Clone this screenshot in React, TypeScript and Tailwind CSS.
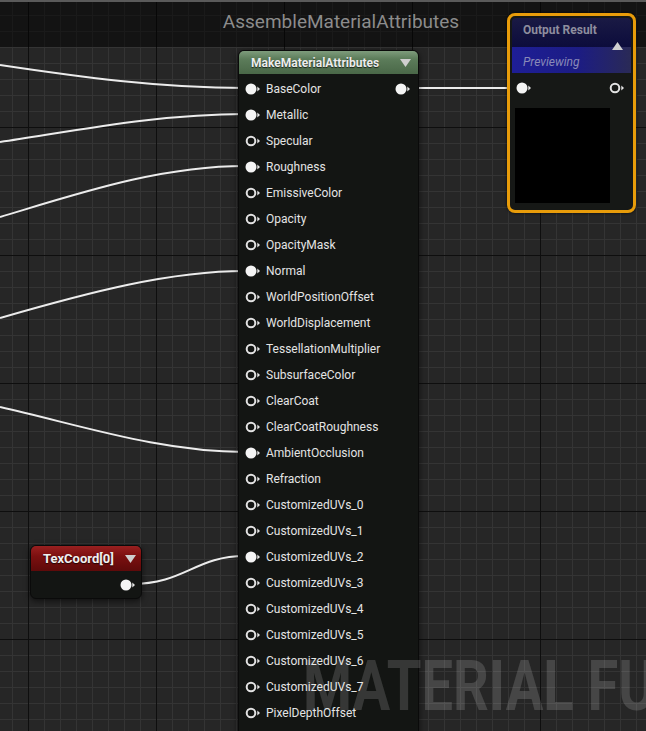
import React from 'react';

const PINS: { name: string; linked?: boolean }[] = [
  { name: 'BaseColor', linked: true },
  { name: 'Metallic', linked: true },
  { name: 'Specular' },
  { name: 'Roughness', linked: true },
  { name: 'EmissiveColor' },
  { name: 'Opacity' },
  { name: 'OpacityMask' },
  { name: 'Normal', linked: true },
  { name: 'WorldPositionOffset' },
  { name: 'WorldDisplacement' },
  { name: 'TessellationMultiplier' },
  { name: 'SubsurfaceColor' },
  { name: 'ClearCoat' },
  { name: 'ClearCoatRoughness' },
  { name: 'AmbientOcclusion', linked: true },
  { name: 'Refraction' },
  { name: 'CustomizedUVs_0' },
  { name: 'CustomizedUVs_1' },
  { name: 'CustomizedUVs_2', linked: true },
  { name: 'CustomizedUVs_3' },
  { name: 'CustomizedUVs_4' },
  { name: 'CustomizedUVs_5' },
  { name: 'CustomizedUVs_6' },
  { name: 'CustomizedUVs_7' },
  { name: 'PixelDepthOffset' },
];

const WIRES = [
  'M0 65 C80 77, 160 88, 245 88',
  'M0 142 C80 130, 160 114, 245 114',
  'M0 217 C80 193, 160 166, 245 166',
  'M0 318 C90 292, 170 271, 245 271',
  'M0 407 C80 425, 160 452, 245 452',
  'M131 584 C185 584, 195 556, 245 556',
  'M408 88 L517 88',
];

function Pin({ filled }: { filled?: boolean }) {
  return (
    <svg width="16" height="12" viewBox="0 0 16 12" className="shrink-0">
      {filled ? (
        <circle cx="6" cy="6" r="5.5" fill="#f4f4f4" />
      ) : (
        <circle cx="6" cy="6" r="4.3" fill="none" stroke="#e2e2e2" strokeWidth="2" />
      )}
      <path d="M12.3 3.6 L15 6 L12.3 8.4 Z" fill="#e6e6e6" />
    </svg>
  );
}

function Caret({ up }: { up?: boolean }) {
  return (
    <svg width="11" height="8" viewBox="0 0 11 8">
      <path d={up ? 'M0 8 L5.5 0 L11 8 Z' : 'M0 0 L11 0 L5.5 8 Z'} fill="#cfcfcf" />
    </svg>
  );
}

function Canvas() {
  return (
    <svg width="646" height="731" className="absolute inset-0">
      <defs>
        <pattern id="minor" x="12" y="15" width="16" height="16" patternUnits="userSpaceOnUse">
          <rect x="0" y="0" width="1" height="16" fill="#343434" />
          <rect x="0" y="0" width="16" height="1" fill="#343434" />
        </pattern>
        <pattern id="major" x="28" y="127" width="128" height="128" patternUnits="userSpaceOnUse">
          <rect x="0" y="0" width="1" height="128" fill="#0e0e0e" />
          <rect x="0" y="0" width="128" height="1" fill="#0e0e0e" />
        </pattern>
      </defs>
      <rect width="646" height="731" fill="#262626" />
      <rect width="646" height="731" fill="url(#minor)" />
      <rect width="646" height="731" fill="url(#major)" />
      {WIRES.map((d) => (
        <path key={d} d={d} fill="none" stroke="#ececec" strokeWidth="2" />
      ))}
    </svg>
  );
}

export default function App() {
  return (
    <div className="relative w-[646px] h-[731px] overflow-hidden bg-[#262626] font-['Roboto',sans-serif]">
      <Canvas />

      {/* title bar */}
      <div className="absolute top-0 left-0 right-0 h-[47px] bg-black/50 border-t-2 border-[#5a5a5a] flex items-center justify-center">
        <span className="text-[19px] text-[#8c8c8c] ml-[36px] -mt-[4px]">AssembleMaterialAttributes</span>
      </div>

      {/* MakeMaterialAttributes */}
      <div className="absolute left-[238px] top-[50px] w-[181px] h-[720px] rounded-[6px] bg-[#131513] border border-[#0a0a0a] shadow-[0_2px_6px_rgba(0,0,0,0.6)] flex flex-col">
        <div className="h-[23px] rounded-t-[5px] bg-[linear-gradient(180deg,#7e9c7c_0%,#5c7c5a_35%,#4a6848_100%)] flex items-center justify-between pl-[12px] pr-[7px]">
          <span className="text-[12px] font-bold text-[#ececec] [text-shadow:0_1px_1px_rgba(0,0,0,0.7)]">MakeMaterialAttributes</span>
          <Caret />
        </div>
        <div className="flex flex-col pt-[2px]">
          {PINS.map((p, i) => (
            <div key={p.name} className="h-[26px] flex items-center justify-between pl-[6px] pr-[7px]">
              <div className="flex items-center gap-[5px]">
                <Pin filled={p.linked} />
                <span className="text-[12px] text-[#e4e4e4]">{p.name}</span>
              </div>
              {i === 0 && <Pin filled />}
            </div>
          ))}
        </div>
      </div>

      {/* Output Result */}
      <div className="absolute left-[507px] top-[13px] w-[129px] h-[200px] rounded-[8px] border-[3px] border-[#e89c0a] bg-[#161816] p-[2px] flex flex-col shadow-[0_0_3px_rgba(0,0,0,0.8)]">
        <div className="h-[29px] rounded-t-[4px] bg-[linear-gradient(180deg,#1a1a44_0%,#0c0c3c_100%)] flex items-start pl-[11px] pt-[3px]">
          <span className="text-[12px] font-bold text-[#8e8e9e]">Output Result</span>
        </div>
        <div className="h-[26px] bg-[linear-gradient(90deg,#1e1e96_0%,#1c1c84_55%,#2a2a56_100%)] flex items-center pl-[11px] pt-[3px] relative">
          <span className="text-[12px] italic text-[#8a8ab8]">Previewing</span>
          <div className="absolute right-[8px] -top-[5px]">
            <Caret up />
          </div>
        </div>
        <div className="h-[30px] flex items-center justify-between pl-[4px] pr-[6px]">
          <Pin filled />
          <Pin />
        </div>
        <div className="ml-[3px] mt-[5px] w-[95px] h-[95px] bg-black" />
      </div>

      {/* TexCoord[0] */}
      <div className="absolute left-[30px] top-[545px] w-[112px] h-[54px] rounded-[6px] bg-[#131513] border border-[#0a0a0a] shadow-[0_2px_6px_rgba(0,0,0,0.6)] flex flex-col">
        <div className="h-[25px] rounded-t-[5px] bg-[linear-gradient(180deg,#9a2020_0%,#7c1010_40%,#5e0a0a_100%)] flex items-center justify-between pl-[12px] pr-[5px]">
          <span className="text-[13px] font-bold text-[#f0f0f0] [text-shadow:0_1px_1px_rgba(0,0,0,0.7)]">TexCoord[0]</span>
          <Caret />
        </div>
        <div className="flex-1 flex items-center justify-end pr-[5px]">
          <Pin filled />
        </div>
      </div>

      {/* watermark */}
      <div className="absolute left-[303px] top-[651px] pointer-events-none whitespace-nowrap origin-left scale-x-[0.8] text-[70px] font-bold leading-none text-white/15">
        MATERIAL FUNCTION
      </div>
    </div>
  );
}
